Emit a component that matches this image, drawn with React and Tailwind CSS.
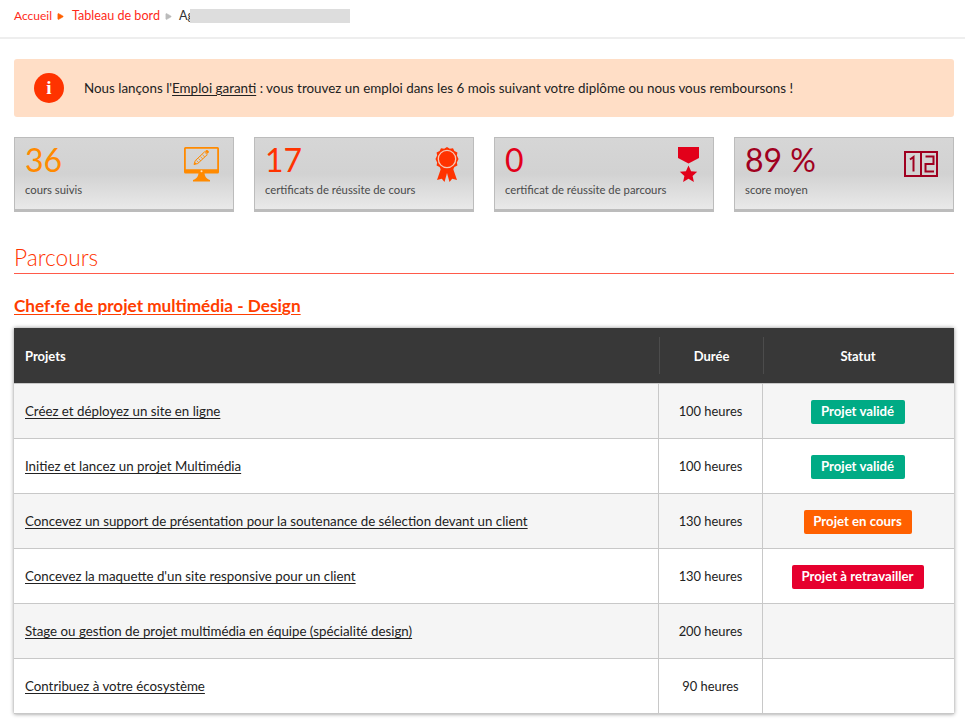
import { Triangle } from 'lucide-react'

const stats = [
    { value: '36', label: 'cours suivis', color: 'text-[#ff8a00]', icon: <ScreenIcon /> },
    { value: '17', label: 'certificats de réussite de cours', color: 'text-[#ff3300]', icon: <RibbonIcon /> },
    { value: '0', label: 'certificat de réussite de parcours', color: 'text-[#e2001a]', icon: <MedalIcon /> },
    { value: '89 %', label: 'score moyen', color: 'text-[#a00020]', icon: <ScoreIcon /> },
]

const projects = [
    { name: 'Créez et déployez un site en ligne', duration: '100 heures', status: 'valid' },
    { name: 'Initiez et lancez un projet Multimédia', duration: '100 heures', status: 'valid' },
    { name: 'Concevez un support de présentation pour la soutenance de sélection devant un client', duration: '130 heures', status: 'progress' },
    { name: "Concevez la maquette d'un site responsive pour un client", duration: '130 heures', status: 'redo' },
    { name: 'Stage ou gestion de projet multimédia en équipe (spécialité design)', duration: '200 heures' },
    { name: 'Contribuez à votre écosystème', duration: '90 heures' },
]

const badges = {
    valid: { label: 'Projet validé', className: 'bg-[#00ab85] w-[94px]' },
    progress: { label: 'Projet en cours', className: 'bg-[#ff6000] w-[108px]' },
    redo: { label: 'Projet à retravailler', className: 'bg-[#e6002e] w-[132px]' },
}

function ScreenIcon() {
    return (
        <svg width="35" height="35" viewBox="0 0 35 35" className="mt-[9px] text-[#ff8a00]">
            <path fill="currentColor" fillRule="evenodd" d="M1.500 0h32A1.500 1.500 0 0 1 35 1.500V25a1.500 1.500 0 0 1-1.500 1.500h-32A1.500 1.500 0 0 1 0 25V1.500A1.500 1.500 0 0 1 1.500 0ZM1.800 1.800v20.400h31.400V1.800Z" />
            <path fill="currentColor" d="M14.500 26h6c.3 3.500 1.500 5.500 5.500 7v1.500H9V33c4-1.500 5.200-3.500 5.500-7Z" />
            <circle cx="17.500" cy="24.300" r="1" fill="#ffe2c0" />
            <path fill="none" stroke="currentColor" strokeWidth="1" d="M10 17.500l1.200-3.800 9.300-8.800 2.800 2.700-9.500 8.900Z" />
            <path stroke="currentColor" strokeWidth="0.800" d="M12.500 13.500l2.400 2.300M14.500 11.600l2.400 2.300M16.500 9.700l2.400 2.300M18.500 7.800l2.400 2.300" />
            <path fill="currentColor" d="M10 17.500l.8-2.600 1.800 1.800ZM21 4.300l1.200-1.100c.5-.4 1-.4 1.400 0l1.100 1c.4.500.4 1 0 1.400l-1.200 1.200Z" />
        </svg>
    )
}

function RibbonIcon() {
    return (
        <svg width="24" height="35" viewBox="0 0 24 35" className="mt-[9px] text-[#ff3300]">
            <path fill="currentColor" d="M6.500 20 2 33l4.800-1.300L9.500 35 12 26l2.500 9 2.700-3.300L22 33l-4.500-13Z" />
            <path fill="currentColor" d="M12 0l2.800 1.700 3.200-.5 1.400 2.900 3 1.300-.5 3.200L23.500 12l-1.600 3.400.5 3.200-3 1.300-1.400 2.900-3.200-.5L12 24l-2.800-1.700-3.200.5-1.400-2.900-3-1.300.5-3.200L.5 12l1.600-3.400-.5-3.200 3-1.300L6 1.200l3.200.5Z" />
            <circle cx="12" cy="12" r="8.700" fill="none" stroke="#f3c9b8" strokeWidth="1.300" />
        </svg>
    )
}

function MedalIcon() {
    return (
        <svg width="21" height="35" viewBox="0 0 21 35" className="mt-[9px] text-[#e2001a]">
            <path fill="currentColor" d="M0 0h21v11L10.500 16.500 0 11Z" />
            <path fill="currentColor" d="M10.500 18.500l2.600 5.700 6.100.6-4.600 4.100 1.300 6-5.400-3.100-5.400 3.100 1.300-6-4.600-4.100 6.100-.6Z" />
        </svg>
    )
}

function ScoreIcon() {
    return (
        <svg width="34" height="26" viewBox="0 0 34 26" className="mt-[13px] mr-[1px] text-[#a00020]" fill="none" stroke="currentColor">
            <rect x="1" y="1" width="32" height="24" strokeWidth="2" />
            <path strokeWidth="2" d="M17 1v24" />
            <path strokeWidth="2" d="M6 8.500 9.500 6v14.500" />
            <path strokeWidth="2" d="M21.500 5.500h8v7.500h-8v7.500h8.500" />
        </svg>
    )
}

function StatCard({ value, label, color, icon }) {
    return (
        <div className="flex h-[75px] justify-between border border-b-[3px] border-[#bcbcbc] bg-gradient-to-b from-[#d6d6d6] via-[#d2d2d2] to-[#e9e9e9] pl-[10px] pr-[14px]">
            <div className="min-w-0">
                <div className={`mt-[4px] text-[32px] leading-[36px] ${color}`}>{value}</div>
                <div className="mt-[4px] text-[11.3px] leading-[16px] whitespace-nowrap text-[#4a4a4a]">{label}</div>
            </div>
            <div>{icon}</div>
        </div>
    )
}

function ProjectRow({ project, index }) {
    const badge = badges[project.status]
    return (
        <div className={`grid h-[55px] grid-cols-[644px_105px_1fr] border-t border-[#c8c8c8] ${index % 2 === 0 ? 'bg-[#f5f5f5]' : 'bg-white'}`}>
            <div className="flex items-center pt-[2px] pl-[11px]">
                <a href="#" className="underline underline-offset-2">{project.name}</a>
            </div>
            <div className="flex items-center justify-center border-x border-[#c8c8c8] pt-[2px] text-[12.9px]">{project.duration}</div>
            <div className="flex items-center justify-center pt-[2px] pr-[2px]">
                {badge && (
                    <span className={`flex h-[24px] items-center justify-center rounded-[2px] text-[13.2px] font-bold text-white ${badge.className}`}>
                        {badge.label}
                    </span>
                )}
            </div>
        </div>
    )
}

export default function App() {
    return (
        <div className="min-h-[721px] overflow-hidden bg-white text-[13.3px] text-[#222] [font-family:Lato,'Noto_Sans',sans-serif]">
            <nav className="flex h-[39px] items-center border-b-2 border-[#eeeeee] pb-[5px] pl-[14px] text-[12.6px] text-[#ff2a1a]">
                <a href="#" className="w-[38px] text-[12px]">Accueil</a>
                <Triangle className="mr-[8px] ml-[5px] size-[7px] rotate-90 fill-[#ff6000] text-[#ff6000]" />
                <a href="#">Tableau de bord</a>
                <Triangle className="mr-[7px] ml-[5px] size-[7px] rotate-90 fill-[#bbbbbb] text-[#bbbbbb]" />
                <span className="text-[#333]">Ag</span>
                <span className="-ml-[4px] h-[14px] w-[160px] bg-[#dddddd]" />
            </nav>

            <main className="pr-[11px] pl-[14px]">
                <div className="mt-[20px] flex h-[58px] items-center rounded-[3px] bg-[#ffdec6] pl-[20px]">
                    <span className="flex size-[30px] items-center justify-center rounded-full bg-[#ff3300] text-[19px] font-bold text-white [font-family:'Liberation_Serif',serif]">i</span>
                    <p className="ml-[20px] text-[13.4px]">
                        Nous lançons l'<a href="#" className="underline underline-offset-2">Emploi garanti</a> : vous trouvez un emploi dans les 6 mois suivant votre diplôme ou nous vous remboursons !
                    </p>
                </div>

                <div className="mt-[20px] grid grid-cols-4 gap-[20px]">
                    {stats.map((stat) => (
                        <StatCard key={stat.label} {...stat} />
                    ))}
                </div>

                <h2 className="mt-[31px] h-[30px] text-[22.7px] leading-[30px] font-light text-[#ff3300] shadow-[0_1px_0_#ff5a4a]">Parcours</h2>

                <h3 className="mt-[21px] text-[17.2px] leading-[24px] font-bold text-[#ff3d00]">
                    <a href="#" className="underline underline-offset-2">Chef·fe de projet multimédia - Design</a>
                </h3>

                <div className="mt-[10px] border-b border-[#c8c8c8] shadow-[0_0_4px_rgba(0,0,0,0.45)]">
                    <div className="grid h-[55px] grid-cols-[645px_105px_1fr] bg-[#383838] text-[13px] font-bold text-white">
                        <div className="flex items-center pt-[2px] pl-[11px]">Projets</div>
                        <div className="my-[9px] flex items-center justify-center border-x border-[#4c4c4c] pt-[2px]">Durée</div>
                        <div className="flex items-center justify-center pt-[2px] pr-[2px]">Statut</div>
                    </div>
                    {projects.map((project, i) => (
                        <ProjectRow key={project.name} project={project} index={i} />
                    ))}
                </div>
            </main>
        </div>
    )
}
